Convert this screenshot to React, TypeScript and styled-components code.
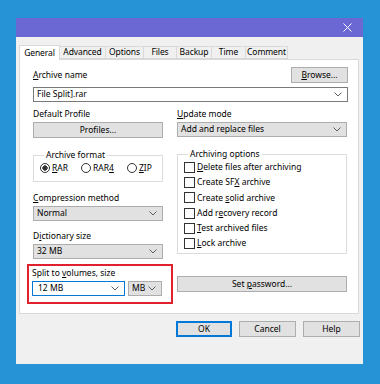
import React from 'react';
import styled, { createGlobalStyle } from 'styled-components';

const GlobalStyle = createGlobalStyle`
  body {
    margin: 0;
    background: #2693d6;
    font-family: "Noto Sans", "Liberation Sans", sans-serif;
    font-size: 8.5px;
    color: #000;
  }
`;

const Key = ({ text, at }: { text: string; at: number }) => (
  <span>
    {text.slice(0, at)}
    <u>{text[at]}</u>
    {text.slice(at + 1)}
  </span>
);

const Chevron = () => (
  <svg width="8" height="5" viewBox="0 0 8 5">
    <path d="M0.5 0.5 L4 4 L7.5 0.5" fill="none" stroke="#606060" strokeWidth="1" />
  </svg>
);

const Page = styled.div`
  width: 380px;
  height: 384px;
  padding: 18px 0 0 16px;
  box-sizing: border-box;
`;

const Window = styled.div`
  width: 347px;
  height: 346px;
  background: #f0f0f0;
  display: flex;
  flex-direction: column;
`;

const TitleBar = styled.div`
  height: 19px;
  background: #6b68d4;
  display: flex;
  justify-content: flex-end;
  align-items: center;
  padding-right: 11px;
`;

const Body = styled.div`
  padding: 7px 0 0 3px;
  display: flex;
  flex-direction: column;
`;

const Tabs = styled.div`
  display: flex;
  align-items: flex-end;
  height: 15px;
`;

const Tab = styled.div<{ $active?: boolean; $w: number }>`
  width: ${(p) => p.$w}px;
  height: ${(p) => (p.$active ? 15 : 13)}px;
  box-sizing: border-box;
  background: ${(p) => (p.$active ? '#fff' : '#f0f0f0')};
  border: 1px solid #d9d9d9;
  border-bottom: ${(p) => (p.$active ? 'none' : '1px solid #d9d9d9')};
  margin-bottom: ${(p) => (p.$active ? '-1px' : '0')};
  margin-left: ${(p) => (p.$active ? 0 : -1)}px;
  position: relative;
  z-index: ${(p) => (p.$active ? 1 : 0)};
  display: flex;
  align-items: center;
  justify-content: center;
  line-height: 1;
  letter-spacing: -0.1px;
  white-space: nowrap;
`;

const Panel = styled.div`
  width: 340px;
  height: 255px;
  box-sizing: border-box;
  background: #fff;
  border: 1px solid #d9d9d9;
  padding: 6px 10px 0 13px;
  display: flex;
  flex-direction: column;
`;

const NameRow = styled.div`
  display: flex;
  justify-content: space-between;
  align-items: flex-end;
  height: 17px;
`;

const Label = styled.div<{ $top?: number }>`
  margin-top: ${(p) => p.$top ?? 0}px;
  height: 10px;
  line-height: 10px;
  margin-bottom: 3px;
  white-space: nowrap;
`;

const Button = styled.div<{ $w?: number; $primary?: boolean; $top?: number }>`
  width: ${(p) => (p.$w ? `${p.$w}px` : '100%')};
  height: 16px;
  margin-top: ${(p) => p.$top ?? 0}px;
  box-sizing: border-box;
  background: #e1e1e1;
  border: 1px solid ${(p) => (p.$primary ? '#0078d7' : '#adadad')};
  box-shadow: ${(p) => (p.$primary ? 'inset 0 0 0 1px #0078d7' : 'none')};
  display: flex;
  align-items: center;
  justify-content: center;
  line-height: 1;
`;

const Combo = styled.div<{ $edit?: boolean; $focus?: boolean; $w?: number; $top?: number }>`
  width: ${(p) => (p.$w ? `${p.$w}px` : '100%')};
  height: 15px;
  margin-top: ${(p) => p.$top ?? 0}px;
  box-sizing: border-box;
  background: ${(p) => (p.$edit ? '#fff' : '#e1e1e1')};
  border: 1px solid ${(p) => (p.$focus ? '#0078d7' : p.$edit ? '#7a7a7a' : '#adadad')};
  display: flex;
  align-items: center;
  justify-content: space-between;
  padding: 0 5px 0 ${(p) => (p.$focus ? 5 : 3)}px;
  line-height: 1;
  white-space: nowrap;
`;

const Columns = styled.div`
  display: grid;
  grid-template-columns: 130px 170px;
  column-gap: 14px;
  margin-top: 7px;
`;

const Column = styled.div`
  display: flex;
  flex-direction: column;
`;

const Group = styled.fieldset<{ $h: number }>`
  margin: 12px 0 0 0;
  height: ${(p) => p.$h}px;
  box-sizing: border-box;
  border: 1px solid #dcdcdc;
  padding: 0 6px;
  min-width: 0;

  legend {
    padding: 0 2px;
    margin-left: 4px;
    line-height: 10px;
  }
`;

const RadioRow = styled.div`
  display: flex;
  gap: 13px;
  margin-top: 3px;
`;

const Radio = styled.div<{ $on?: boolean }>`
  display: flex;
  align-items: center;
  gap: 2px;
  line-height: 1;

  &::before {
    content: '';
    width: 10px;
    height: 10px;
    box-sizing: border-box;
    border-radius: 50%;
    border: 1px solid #333;
    background: ${(p) => (p.$on ? 'radial-gradient(circle, #333 0 2.4px, #fff 2.9px)' : '#fff')};
  }
`;

const Checks = styled.div`
  display: flex;
  flex-direction: column;
  gap: 4.2px;
  margin-top: 3px;
`;

const Check = styled.div`
  display: flex;
  align-items: center;
  gap: 2px;
  height: 11px;
  line-height: 1;
  white-space: nowrap;

  &::before {
    content: '';
    width: 11px;
    height: 11px;
    box-sizing: border-box;
    border: 1px solid #333;
    background: #fff;
    flex: none;
  }
`;

const SplitBox = styled.div`
  margin: 5px -10px 0 -6px;
  border: 2px solid #e0202c;
  padding: 2px 8px 6px 3px;
  display: flex;
  flex-direction: column;
`;

const SplitRow = styled.div`
  display: flex;
  gap: 3px;
`;

const Footer = styled.div`
  display: flex;
  justify-content: flex-end;
  gap: 7px;
  padding: 7px 3px 0 0;
`;

const checks: [string, number][] = [
  ['Delete files after archiving', 0],
  ['Create SFX archive', 9],
  ['Create solid archive', 7],
  ['Add recovery record', 5],
  ['Test archived files', 0],
  ['Lock archive', 0],
];

const tabs: [string, number][] = [
  ['General', 41],
  ['Advanced', 47],
  ['Options', 39],
  ['Files', 34],
  ['Backup', 36],
  ['Time', 35],
  ['Comment', 43],
];

const App = () => (
  <Page>
    <GlobalStyle />
    <Window>
      <TitleBar>
        <svg width="9" height="9" viewBox="0 0 9 9">
          <path d="M0.5 0.5 L8.5 8.5 M8.5 0.5 L0.5 8.5" stroke="#fff" strokeWidth="1" />
        </svg>
      </TitleBar>
      <Body>
        <Tabs>
          {tabs.map(([name, w], i) => (
            <Tab key={name} $w={w} $active={i === 0}>
              {name}
            </Tab>
          ))}
        </Tabs>
        <Panel>
          <NameRow>
            <Label>
              <Key text="Archive name" at={0} />
            </Label>
            <Button $w={57}>
              <Key text="Browse..." at={0} />
            </Button>
          </NameRow>
          <Combo $edit $top={4}>
            <span>File Split].rar</span>
            <Chevron />
          </Combo>
          <Columns>
            <Column>
              <Label>Default Profile</Label>
              <Button>
                <Key text="Profiles..." at={4} />
              </Button>
              <Group $h={32}>
                <legend>Archive format</legend>
                <RadioRow>
                  <Radio $on>
                    <Key text="RAR" at={0} />
                  </Radio>
                  <Radio>
                    <Key text="RAR4" at={3} />
                  </Radio>
                  <Radio>
                    <Key text="ZIP" at={0} />
                  </Radio>
                </RadioRow>
              </Group>
              <Label $top={11}>
                <Key text="Compression method" at={0} />
              </Label>
              <Combo>
                <span>Normal</span>
                <Chevron />
              </Combo>
              <Label $top={10}>
                <Key text="Dictionary size" at={1} />
              </Label>
              <Combo>
                <span>32 MB</span>
                <Chevron />
              </Combo>
              <SplitBox>
                <Label>
                  <Key text="Split to volumes, size" at={9} />
                </Label>
                <SplitRow>
                  <Combo $edit $focus $w={93}>
                    <span>12 MB</span>
                    <Chevron />
                  </Combo>
                  <Combo $w={34}>
                    <span>MB</span>
                    <Chevron />
                  </Combo>
                </SplitRow>
              </SplitBox>
            </Column>
            <Column>
              <Label>
                <Key text="Update mode" at={0} />
              </Label>
              <Combo>
                <span>Add and replace files</span>
                <Chevron />
              </Combo>
              <Group $h={105}>
                <legend>Archiving options</legend>
                <Checks>
                  {checks.map(([text, at]) => (
                    <Check key={text}>
                      <Key text={text} at={at} />
                    </Check>
                  ))}
                </Checks>
              </Group>
              <Button $top={22}>
                <Key text="Set password..." at={4} />
              </Button>
            </Column>
          </Columns>
        </Panel>
        <Footer>
          <Button $w={56} $primary>OK</Button>
          <Button $w={57}>Cancel</Button>
          <Button $w={57}>Help</Button>
        </Footer>
      </Body>
    </Window>
  </Page>
);

export default App;
